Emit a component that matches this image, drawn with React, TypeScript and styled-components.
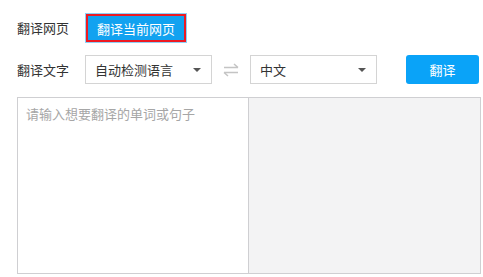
import React from 'react';
import styled, { createGlobalStyle } from 'styled-components';

const GlobalStyle = createGlobalStyle`
  html, body {
    margin: 0;
    padding: 0;
    background: #fff;
  }
  body {
    font-family: "Noto Sans CJK SC", "Noto Sans", sans-serif;
    font-size: 13px;
    color: #333;
  }
`;

const Page = styled.div`
  width: 483px;
  height: 277px;
  box-sizing: border-box;
  padding: 14px 2px 0 17px;
  display: flex;
  flex-direction: column;
`;

const Row = styled.div<{ $gap?: number }>`
  display: flex;
  align-items: center;
  margin-bottom: ${(p) => p.$gap ?? 0}px;
`;

const Label = styled.span`
  width: 68px;
  font-size: 13px;
  color: #333;
  line-height: 18px;
`;

const PageButton = styled.button`
  box-sizing: border-box;
  margin-left: 1px;
  height: 28px;
  width: 100px;
  padding: 0;
  border: 2px solid #ee1a22;
  outline: 1px solid #8fd0f5;
  background: #12a2f0;
  color: #fff;
  font-family: inherit;
  font-size: 13px;
`;

const Select = styled.div`
  box-sizing: border-box;
  width: 127px;
  height: 29px;
  border: 1px solid #d4d4d4;
  background: #fff;
  display: flex;
  align-items: center;
  justify-content: space-between;
  padding: 0 10px 0 9px;
  color: #333;
`;

const Caret = styled.span`
  width: 0;
  height: 0;
  border-left: 4px solid transparent;
  border-right: 4px solid transparent;
  border-top: 4px solid #555;
`;

const Swap = styled.div`
  width: 38px;
  display: flex;
  justify-content: center;
`;

const TranslateButton = styled.button`
  margin-left: auto;
  margin-right: 2px;
  box-sizing: border-box;
  width: 73px;
  height: 29px;
  border: none;
  border-radius: 3px;
  background: #0aa3f8;
  color: #fff;
  font-family: inherit;
  font-size: 13px;
`;

const Panels = styled.div`
  display: flex;
  width: 464px;
  height: 177px;
  box-sizing: border-box;
  border: 1px solid #cfcfd2;
`;

const InputPane = styled.div`
  flex: 0 0 231px;
  box-sizing: border-box;
  border-right: 1px solid #cfcfd2;
  padding: 6px 8px;
  color: #a6a6a6;
  font-size: 13px;
  line-height: 20px;
`;

const OutputPane = styled.div`
  flex: 1;
  background: #f3f3f4;
`;

function SwapIcon() {
  return (
    <svg width="16" height="14" viewBox="0 0 16 14" fill="none" stroke="#c4c4c4" strokeWidth="1.5">
      <path d="M1 4.5h14M11 1l4 3.5" />
      <path d="M15 9.5H1M5 13L1 9.5" />
    </svg>
  );
}

export default function App() {
  return (
    <Page>
      <GlobalStyle />
      <Row $gap={13}>
        <Label>翻译网页</Label>
        <PageButton>翻译当前网页</PageButton>
      </Row>
      <Row $gap={13}>
        <Label>翻译文字</Label>
        <Select>
          <span>自动检测语言</span>
          <Caret />
        </Select>
        <Swap>
          <SwapIcon />
        </Swap>
        <Select>
          <span>中文</span>
          <Caret />
        </Select>
        <TranslateButton>翻译</TranslateButton>
      </Row>
      <Panels>
        <InputPane>请输入想要翻译的单词或句子</InputPane>
        <OutputPane />
      </Panels>
    </Page>
  );
}
